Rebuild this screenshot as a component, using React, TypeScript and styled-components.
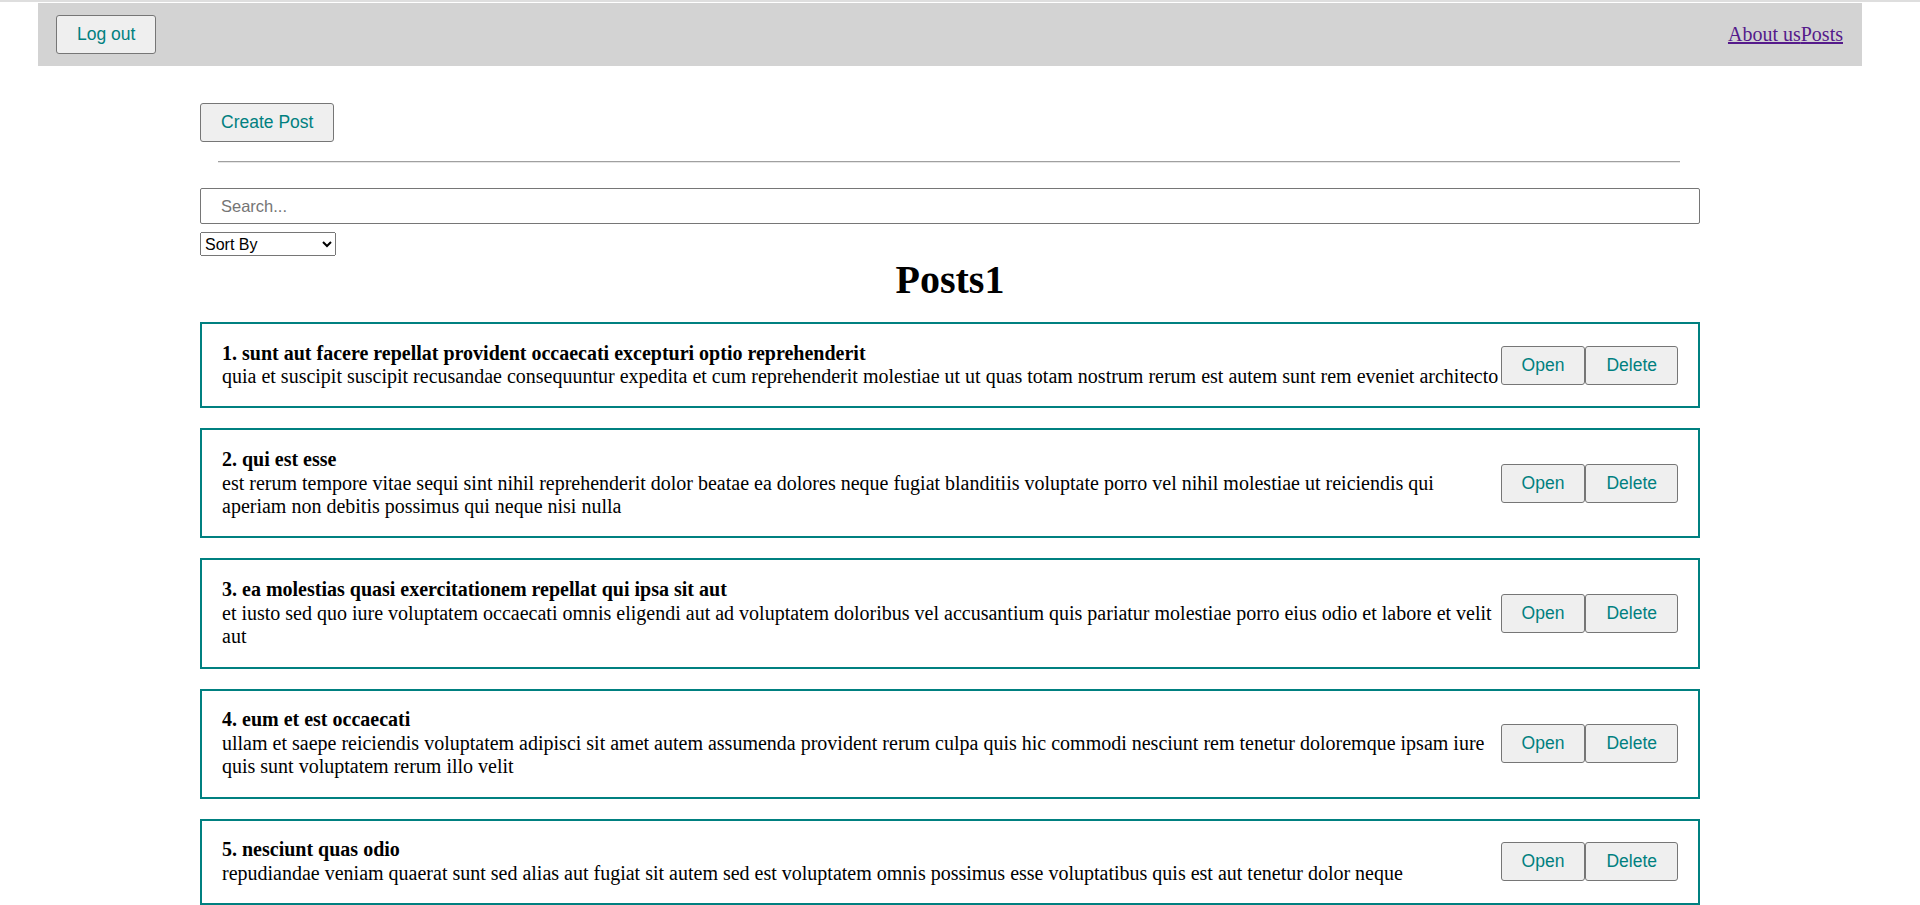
import { FC, useState } from "react";
import styled, { createGlobalStyle } from "styled-components";

interface Post {
    id: number;
    title: string;
    body: string;
}

const initialPosts: Post[] = [
    {
        id: 1,
        title: "sunt aut facere repellat provident occaecati excepturi optio reprehenderit",
        body: "quia et suscipit\nsuscipit recusandae consequuntur expedita et cum\nreprehenderit molestiae ut ut quas totam\nnostrum rerum est autem sunt rem eveniet architecto",
    },
    {
        id: 2,
        title: "qui est esse",
        body: "est rerum tempore vitae\nsequi sint nihil reprehenderit dolor beatae ea dolores neque\nfugiat blanditiis voluptate porro vel nihil molestiae ut reiciendis\nqui aperiam non debitis possimus qui neque nisi nulla",
    },
    {
        id: 3,
        title: "ea molestias quasi exercitationem repellat qui ipsa sit aut",
        body: "et iusto sed quo iure\nvoluptatem occaecati omnis eligendi aut ad\nvoluptatem doloribus vel accusantium quis pariatur\nmolestiae porro eius odio et labore et velit aut",
    },
    {
        id: 4,
        title: "eum et est occaecati",
        body: "ullam et saepe reiciendis voluptatem adipisci\nsit amet autem assumenda provident rerum culpa\nquis hic commodi nesciunt rem tenetur doloremque ipsam iure\nquis sunt voluptatem rerum illo velit",
    },
    {
        id: 5,
        title: "nesciunt quas odio",
        body: "repudiandae veniam quaerat sunt sed\nalias aut fugiat sit autem sed est\nvoluptatem omnis possimus esse voluptatibus quis\nest aut tenetur dolor neque",
    },
    {
        id: 6,
        title: "dolorem eum magni eos aperiam quia",
        body: "ut aspernatur corporis harum nihil quis provident sequi\nmollitia nobis aliquid molestiae\nperspiciatis et ea nemo ab reprehenderit accusantium quas\nvoluptate dolores velit et doloremque molestiae",
    },
    {
        id: 7,
        title: "magnam facilis autem",
        body: "dolore placeat quibusdam ea quo vitae\nmagni quis enim qui quis quo nemo aut saepe\nquidem repellat excepturi ut quia\nsunt ut sequi eos ea sed quas",
    },
    {
        id: 8,
        title: "dolorem dolore est ipsam",
        body: "dignissimos aperiam dolorem qui eum\nfacilis quibusdam animi sint suscipit qui sint possimus cum\nquaerat magni maiores excepturi\nipsam ut commodi dolor voluptatum modi aut vitae",
    },
    {
        id: 9,
        title: "nesciunt iure omnis dolorem tempora et accusantium",
        body: "consectetur animi nesciunt iure dolore\nenim quia ad\nveniam autem ut quam aut nobis\net est aut quod aut provident voluptas autem voluptas",
    },
    {
        id: 10,
        title: "optio molestias id quia eum",
        body: "quo et expedita modi cum officia vel magni\ndoloribus qui repudiandae\nvero nisi sit\nquos veniam quod sed accusamus veritatis error",
    },
];

const App: FC = () => {
    const [posts, setPosts] = useState<Post[]>(initialPosts);
    const [searchVal, setSearchVal] = useState<string>("");
    const [sortBy, setSortBy] = useState<string>("");

    const removePost = (id: number) => {
        setPosts(posts.filter((item) => item.id !== id));
    };

    const sortedPosts = sortBy
        ? [...posts].sort((a, b) => a[sortBy as "title" | "body"].localeCompare(b[sortBy as "title" | "body"]))
        : posts;
    const shownPosts = sortedPosts.filter((item) =>
        item.title.toLowerCase().includes(searchVal.toLowerCase()),
    );

    return (
        <Page>
            <GlobalStyle />
            <Navbar>
                <Button>Log out</Button>
                <NavLinks>
                    <NavLink href="#about">About us</NavLink>
                    <NavLink href="#posts">Posts</NavLink>
                </NavLinks>
            </Navbar>

            <Content>
                <div>
                    <Button>Create Post</Button>
                </div>
                <Divider />
                <SearchInput
                    value={searchVal}
                    onChange={(e) => setSearchVal(e.target.value)}
                    placeholder="Search..."
                />
                <SortSelect value={sortBy} onChange={(e) => setSortBy(e.target.value)}>
                    <option value="" disabled>
                        Sort By
                    </option>
                    <option value="title">By name</option>
                    <option value="body">By description</option>
                </SortSelect>
                <PageTitle>Posts1</PageTitle>

                <PostList>
                    {shownPosts.map((post) => (
                        <PostCard key={post.id}>
                            <PostText>
                                <PostTitle>
                                    {post.id}. {post.title}
                                </PostTitle>
                                <div>{post.body}</div>
                            </PostText>
                            <PostButtons>
                                <Button>Open</Button>
                                <Button onClick={() => removePost(post.id)}>Delete</Button>
                            </PostButtons>
                        </PostCard>
                    ))}
                </PostList>
            </Content>
        </Page>
    );
};

export default App;

const GlobalStyle = createGlobalStyle`
    html {
        overflow-y: scroll;
    }
    body {
        margin: 0;
        font-family: "Liberation Serif", "Times New Roman", serif;
        font-size: 20px;
        color: #000;
        background: #fff;
    }
`;

const Page = styled.div`
    border-top: 2px solid #dedede;
    padding: 1px 20px 40px 0;
`;

const Navbar = styled.div`
    display: flex;
    justify-content: space-between;
    align-items: center;
    margin: 0 38px;
    padding: 12px 19px 12px 18px;
    background: #d3d3d3;
`;

const NavLinks = styled.div`
    display: flex;
`;

const NavLink = styled.a`
    font-size: 20px;
    color: #551a8b;
    text-decoration: underline;
`;

const Button = styled.button`
    padding: 8px 20px;
    font-family: "Liberation Sans", Arial, sans-serif;
    font-size: 17.5px;
    color: teal;
    background: #efefef;
    border: 1px solid #767676;
    border-radius: 3px;
    cursor: pointer;
`;

const Content = styled.div`
    max-width: 1500px;
    margin: 0 auto;
    padding-top: 37px;
`;

const Divider = styled.hr`
    margin: 19px 20px 25px 18px;
    border: 0;
    border-top: 1px solid #a0a0a0;
    border-bottom: 1px solid #e6e6e6;
`;

const SearchInput = styled.input`
    display: block;
    width: 100%;
    box-sizing: border-box;
    height: 36px;
    padding: 0 20px;
    font-family: "Liberation Sans", Arial, sans-serif;
    font-size: 16.5px;
    border: 1px solid #767676;
    border-radius: 2px;

    &::placeholder {
        color: #757575;
    }
`;

const SortSelect = styled.select`
    display: block;
    margin-top: 8px;
    width: 136px;
    height: 24px;
    font-family: "Liberation Sans", Arial, sans-serif;
    font-size: 16px;
    color: #000;
`;

const PageTitle = styled.h1`
    margin: 0 0 19px;
    text-align: center;
    font-size: 40px;
    font-weight: bold;
`;

const PostList = styled.div`
    display: flex;
    flex-direction: column;
    gap: 20px;
`;

const PostCard = styled.div`
    display: flex;
    justify-content: space-between;
    align-items: center;
    padding: 17.5px 20px;
    border: 2px solid teal;
`;

const PostText = styled.div`
    font-size: 20px;
    line-height: 1.185;
`;

const PostTitle = styled.strong`
    display: block;
`;

const PostButtons = styled.div`
    display: flex;
    flex-shrink: 0;
`;
